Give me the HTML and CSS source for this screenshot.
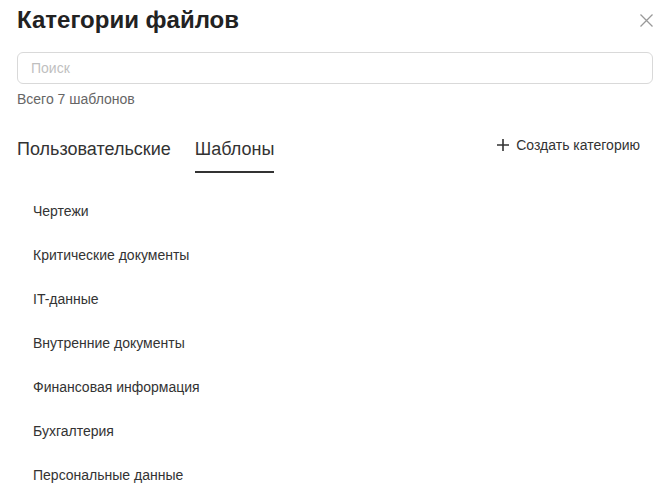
FILE: index.html
```html
<!DOCTYPE html>
<html lang="ru">
<head>
<meta charset="utf-8">
<link rel="stylesheet" href="styles.css">
</head>
<body>
<div class="modal">
  <div class="header">
    <h1 class="title">Категории файлов</h1>
    <button class="close" aria-label="Закрыть">
      <svg width="13" height="13" viewBox="0 0 13 13"><path d="M0.5 0.5L12.5 12.5M12.5 0.5L0.5 12.5" stroke="#999" stroke-width="1.3" fill="none"/></svg>
    </button>
  </div>
  <input class="search" type="text" placeholder="Поиск">
  <div class="total">Всего 7 шаблонов</div>
  <div class="tabs-row">
    <div class="tabs">
      <div class="tab">Пользовательские</div>
      <div class="tab active">Шаблоны</div>
    </div>
    <button class="create">
      <svg width="14" height="14" viewBox="0 0 14 14"><path d="M7 1V13M1 7H13" stroke="#333" stroke-width="1.6" fill="none"/></svg>
      <span>Создать категорию</span>
    </button>
  </div>
  <ul class="list">
    <li>Чертежи</li>
    <li>Критические документы</li>
    <li>IT-данные</li>
    <li>Внутренние документы</li>
    <li>Финансовая информация</li>
    <li>Бухгалтерия</li>
    <li>Персональные данные</li>
  </ul>
</div>
</body>
</html>
```
FILE: styles.css
```css
* { box-sizing: border-box; }
html, body { margin: 0; padding: 0; background: #fff; }
body { font-family: "Liberation Sans", Arial, sans-serif; color: #333; overflow: hidden; }
.modal { padding: 0 9px 0 17px; }
.header { display: flex; align-items: center; justify-content: space-between; height: 40px; }
.title { margin: 0; font-size: 24px; font-weight: 700; color: #222; line-height: 40px; }
.close { border: 0; background: none; padding: 0; width: 13px; height: 13px; display: flex; cursor: pointer; }
.search { display: block; width: 636px; height: 32px; margin-top: 12px; border: 1px solid #d9d9d9; border-radius: 6px; padding: 0 13px; font: 14px "Liberation Sans", Arial, sans-serif; color: #333; outline: none; }
.search::placeholder { color: #bfbfbf; }
.total { margin-top: 6px; font-size: 14px; color: #666; line-height: 18px; }
.tabs-row { display: flex; justify-content: space-between; align-items: flex-start; margin-top: 29px; width: 623px; }
.tabs { display: flex; gap: 24px; }
.tab { font-size: 18px; color: #333; line-height: 24px; padding-bottom: 10px; border-bottom: 2px solid transparent; }
.tab.active { border-bottom-color: #333; }
.create { display: flex; align-items: center; gap: 6px; border: 0; background: none; padding: 0; font: 14px "Liberation Sans", Arial, sans-serif; color: #333; line-height: 16px; cursor: pointer; }
.list { list-style: none; margin: 16px 0 0; padding: 0 0 0 16px; }
.list li { font-size: 14px; color: #333; height: 44px; line-height: 44px; }
```
